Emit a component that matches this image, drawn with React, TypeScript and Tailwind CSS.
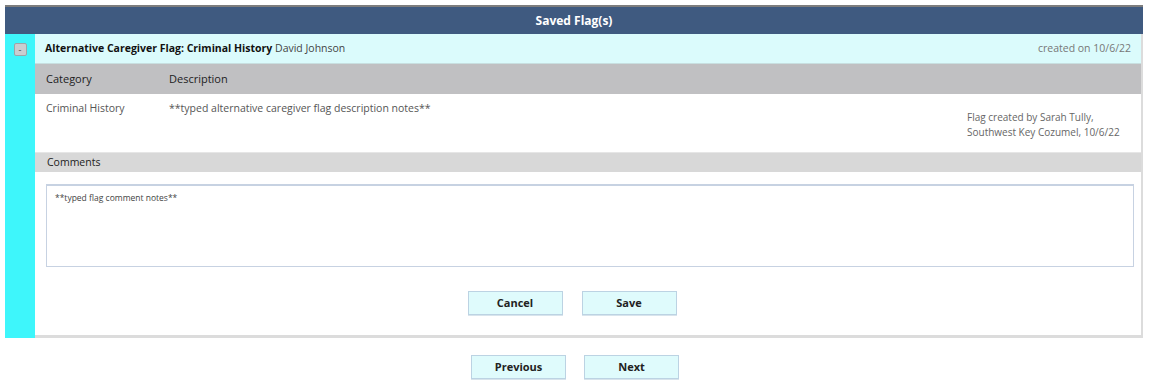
const font = { fontFamily: '"Open Sans", "Noto Sans", sans-serif' };

const ActionButton = ({ label }: { label: string }) => (
  <button className="w-[95px] h-[24px] bg-[#dffbfc] border border-[#bcd3e3] text-[11px] font-bold text-[#222] shadow-[0_1px_0_#d8e4ec]">
    {label}
  </button>
);

export default function App() {
  return (
    <div className="w-[1149px] h-[384px] bg-white text-[#333] pt-[5px] pl-[5px] pr-[6px]" style={font}>
      <div className="h-[29px] bg-[#3f5a80] border-t-2 border-[#7d7d7d] flex items-center justify-center">
        <span className="text-white text-[12px] font-bold">Saved Flag(s)</span>
      </div>

      <div className="flex">
        <div className="w-[30px] bg-[#3ef6fb] flex justify-center pt-[9px]">
          <div className="w-[13px] h-[13px] rounded-[2px] bg-[#c9cdd0] border border-[#9ea4a8] flex items-center justify-center text-[9px] leading-none text-[#444]">
            -
          </div>
        </div>

        <div className="flex-1 border-r-2 border-b-[3px] border-[#dcdcdc]">
          <div className="h-[30px] bg-[#dbfbfc] border-b border-[#c8dfe0] flex items-center justify-between pl-[10px] pr-[10px] text-[10.5px]">
            <div>
              <span className="font-bold text-[#111]">Alternative Caregiver Flag: Criminal History</span>{" "}
              <span className="text-[#444]">David Johnson</span>
            </div>
            <span className="text-[#777]">created on 10/6/22</span>
          </div>

          <div className="h-[30px] bg-[#c0c0c2] flex items-center text-[11px] text-[#222]">
            <div className="w-[134px] pl-[11px]">Category</div>
            <div>Description</div>
          </div>

          <div className="h-[59px] flex text-[10.5px] text-[#555] border-b border-[#e6e6e6]">
            <div className="w-[134px] pl-[11px] pt-[7px]">Criminal History</div>
            <div className="flex-1 pt-[7px]">**typed alternative caregiver flag description notes**</div>
            <div className="w-[174px] pt-[16px] text-[10px] leading-[15px] text-[#666]">
              Flag created by Sarah Tully,
              <br />
              Southwest Key Cozumel, 10/6/22
            </div>
          </div>

          <div className="h-[19px] bg-[#d8d8d8] flex items-center pl-[12px] text-[10.5px] text-[#222]">
            Comments
          </div>

          <div className="pl-[11px] pr-[7px] pt-[12px]">
            <div className="h-[83px] border border-[#c7d2e2] border-t-2 px-[8px] pt-[6px] text-[8.5px] text-[#444]">
              **typed flag comment notes**
            </div>
          </div>

          <div className="flex justify-center gap-[19px] pt-[24px] pb-[20px] pr-[32px]">
            <ActionButton label="Cancel" />
            <ActionButton label="Save" />
          </div>
        </div>
      </div>

      <div className="flex justify-center gap-[18px] pt-[17px] pl-[2px]">
        <ActionButton label="Previous" />
        <ActionButton label="Next" />
      </div>
    </div>
  );
}
